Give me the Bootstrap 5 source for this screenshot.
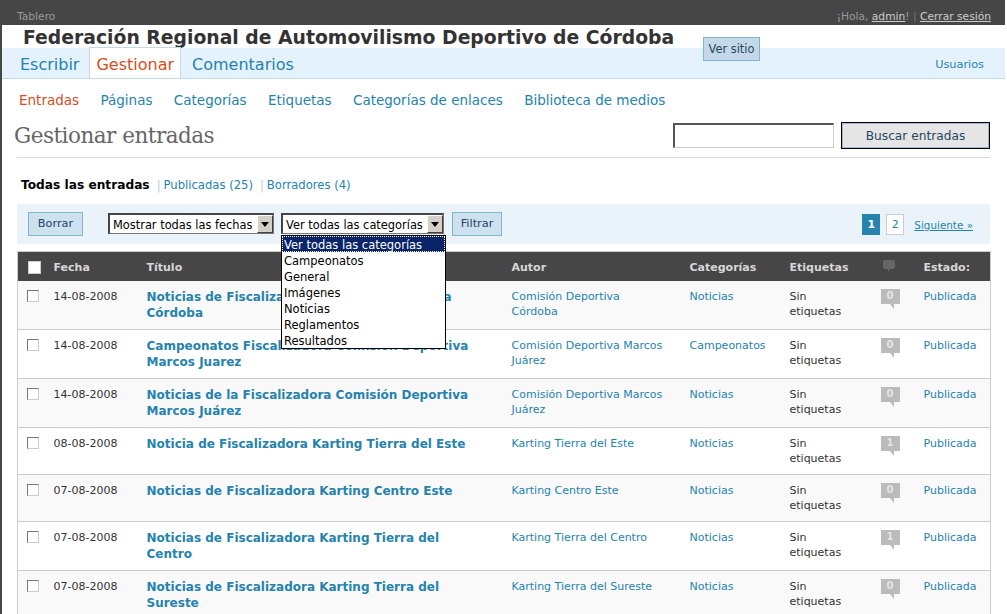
<!DOCTYPE html>
<html lang="es">
  <head>
    <meta charset="utf-8">
    <title>Gestionar entradas</title>
    <link href="https://cdn.jsdelivr.net/npm/bootstrap@5.3.3/dist/css/bootstrap.min.css" rel="stylesheet">
    <style>
      html, body { height: 614px; overflow: hidden; }
      body {
        font-family: "DejaVu Sans", Verdana, sans-serif;
        font-size: 11px;
        color: #333;
        background: #fff;
        border-left: 2px solid #464646;
        border-right: 2px solid #fff;
      }
      a { color: #2583ad; text-decoration: none; }

      /* top dark bar */
      .top-bar { background: #464646; height: 25px; color: #999; font-size: 10.7px; padding: 9px 14px 0 15px; }
      .top-bar a { color: #ccc; text-decoration: underline; }
      .top-bar .sep { color: #777; }

      .site-title { height: 23px; padding-left: 21px; font-size: 18.8px; font-weight: 700; color: #333; line-height: 25px; white-space: nowrap; overflow: hidden; }
      .ver-sitio { position: absolute; left: 703px; top: 37px; width: 57px; height: 24px; background: #c3d9ea; border: 1px solid #80b5d0; color: #264761; font-size: 11.4px; line-height: 22px; text-align: center; }

      /* main tabs */
      .main-tabs { height: 31px; background: #e4f2fd; border-bottom: 1px solid #c6d9e9; padding-left: 18px; }
      .main-tabs a { font-size: 16px; line-height: 34px; height: 31px; display: block; }
      .main-tabs a.active { color: #d54e21; background: #fff; border: 1px solid #c6d9e9; border-bottom: 0; margin: -1px 11px 0 10px; padding: 0 6px; }
      .main-tabs .usuarios { font-size: 11.3px; line-height: 33px; padding-right: 21px; }

      /* sub tabs */
      .sub-tabs { height: 39px; padding-left: 17px; gap: 21.4px; line-height: 43px; }
      .sub-tabs a { font-size: 13.5px; }
      .sub-tabs a.active { color: #d54e21; }

      /* heading */
      .page-head { margin: 0 15px; height: 40px; border-bottom: 1px solid #dadada; }
      .page-head h2 { font-family: "DejaVu Serif", Georgia, serif; font-size: 21.5px; font-weight: 400; color: #666; margin: 0 0 0 -3px; line-height: 36px; letter-spacing: -.5px; }
      .search-box { width: 161px; height: 25px; margin-top: 1px; border: 1px solid #ccc; border-top: 2px solid #555; border-left: 2px solid #555; background: #fff; }
      .search-btn { width: 149px; height: 27px; margin-left: 7px; background: #e5e5e5; border: 1px solid #000; outline: 1px solid #a3b8cc; outline-offset: -2px; color: #264761; font-size: 12.2px; text-align: center; line-height: 26px; }

      .status-list { padding: 18px 0 0 19px; height: 46px; font-size: 11.6px; }
      .status-list b { color: #000; font-size: 12.2px; }
      .status-list .sep { color: #bcd; margin: 0 3px 0 7px; }

      /* filter bar */
      .filter-bar { margin: 0 15px; height: 40px; background: #eaf3fa; padding: 8px 17px 0 11px; }
      .act-btn { background: #cee1ef; border: 1px solid #80b5d0; color: #246; height: 24px; line-height: 22px; text-align: center; font-size: 11.3px; }
      .btn-borrar { width: 55px; }
      .btn-filtrar { width: 50px; margin-left: 8px; }
      .fake-select { height: 21px; border: 1px solid #777; border-top: 2px solid #444; border-left: 2px solid #444; background: #fff; color: #000; font-size: 11.4px; line-height: 20px; padding-left: 3px; margin-top: 1px; position: relative; white-space: nowrap; }
      .fake-select i { position: absolute; right: 0; top: 0; width: 16px; height: 18px; background: #d4d0c8; border: 1px solid #fff; border-right-color: #404040; border-bottom-color: #404040; }
      .fake-select i::after { content: ""; position: absolute; left: 3px; top: 6px; border: 4px solid transparent; border-top: 5px solid #000; border-bottom: 0; }
      .sel-dates { width: 166px; margin-left: 25px; }
      .sel-cats { width: 163px; margin-left: 7px; }
      .pager { gap: 6px; }
      .page-num { width: 18px; height: 21px; margin-top: 2px; line-height: 19px; text-align: center; font-size: 11px; border: 1px solid #ccc; background: #fff; color: #2583ad; }
      .page-num.cur { background: #2583ad; border-color: #2583ad; color: #fff; font-weight: 700; }
      .next-link { text-decoration: underline; margin-left: 4px; font-size: 10.4px; padding-top: 6px; }

      /* opened dropdown */
      .drop-list { position: absolute; left: 281px; top: 235px; width: 165px; border: 1px solid #000; background: #fff; color: #000; font-size: 11.5px; line-height: 18px; z-index: 5; }
      .drop-list div { height: 16px; padding-left: 2px; white-space: nowrap; }
      .drop-list .sel { background: #0a246a; color: #fff; outline: 1px dotted #fff; outline-offset: -1px; }

      /* posts table */
      .posts-wrap { margin: 7px 15px 0; }
      table.posts { table-layout: fixed; width: 973px; margin: 0; border: 1px solid #ccc; border-top: 0; font-size: 11px; color: #333; --bs-table-bg: transparent; }
      table.posts th { background: #464646; color: #d7d7d7; height: 29px; font-weight: 700; padding: 8px 0 0; border-top: 1px solid #ccc; border-bottom: 0; vertical-align: top; font-size: 11px; }
      table.posts td { padding: 8px 8px 0 0; border-bottom: 1px solid #ccc; vertical-align: top; line-height: 15px; height: 49px; }
      table.posts tr.short td { height: 47px; }
      table.posts tr.odd td { background: #f9f9f9; }
      table.posts td.c-title { padding-right: 35px; }
      table.posts td.c-author { padding-right: 25px; }
      table.posts td.c-tags { padding-right: 32px; }
      table.posts td .title { font-size: 12px; font-weight: 700; line-height: 16px; display: block; }
      .w-check { width: 36px; } .w-date { width: 93px; } .w-title { width: 365px; } .w-author { width: 178px; }
      .w-cat { width: 100px; } .w-tags { width: 92px; } .w-com { width: 42px; } .w-state { width: 67px; }
      .chk { display: block; width: 12px; height: 12px; border: 1px solid #777; border-right-color: #ccc; border-bottom-color: #ccc; background: #fff; margin: 1px 0 0 9px; }
      .chk.head { width: 13px; height: 13px; border-color: #ccc; margin: 1px 0 0 10px; }
      .com-icon { display: block; margin-left: 1px; }
      .bubble { display: block; position: relative; width: 19px; height: 15px; margin-left: -1px; background: #bbb; color: #e5e5e5; text-align: center; font-size: 10px; line-height: 13px; font-weight: 700; }
      .bubble::after { content: ""; position: absolute; left: 9px; top: 15px; border-top: 5px solid #bbb; border-left: 4px solid transparent; }
    </style>
    <script src="https://cdn.jsdelivr.net/npm/bootstrap@5.3.3/dist/js/bootstrap.bundle.min.js"></script>
  </head>
  <body>
    <!-- top bar -->
    <div class="top-bar d-flex justify-content-between">
      <span>Tablero</span>
      <span>¡Hola, <a href="#">admin</a>! <span class="sep">|</span> <a href="#">Cerrar sesión</a></span>
    </div>

    <div class="site-title">Federación Regional de Automovilismo Deportivo de Córdoba</div>
    <a class="ver-sitio" href="#">Ver sitio</a>

    <!-- main menu -->
    <div class="main-tabs d-flex">
      <a href="#">Escribir</a>
      <a href="#" class="active">Gestionar</a>
      <a href="#">Comentarios</a>
      <a href="#" class="usuarios ms-auto">Usuarios</a>
    </div>

    <!-- sub menu -->
    <div class="sub-tabs d-flex">
      <a href="#" class="active">Entradas</a>
      <a href="#">Páginas</a>
      <a href="#">Categorías</a>
      <a href="#">Etiquetas</a>
      <a href="#">Categorías de enlaces</a>
      <a href="#">Biblioteca de medios</a>
    </div>

    <div class="page-head d-flex justify-content-between">
      <h2>Gestionar entradas</h2>
      <div class="d-flex align-items-start pt-1">
        <div class="search-box"></div>
        <div class="search-btn">Buscar entradas</div>
      </div>
    </div>

    <div class="status-list">
      <b>Todas las entradas</b><span class="sep">|</span><a href="#">Publicadas (25)</a><span class="sep">|</span><a href="#">Borradores (4)</a>
    </div>

    <!-- filters -->
    <div class="filter-bar d-flex">
      <div class="act-btn btn-borrar">Borrar</div>
      <div class="fake-select sel-dates">Mostrar todas las fechas<i></i></div>
      <div class="fake-select sel-cats">Ver todas las categorías<i></i></div>
      <div class="act-btn btn-filtrar">Filtrar</div>
      <div class="ms-auto d-flex pager">
        <span class="page-num cur">1</span>
        <span class="page-num">2</span>
        <a class="next-link" href="#">Siguiente »</a>
      </div>
    </div>

    <div class="drop-list">
      <div class="sel">Ver todas las categorías</div>
      <div>Campeonatos</div>
      <div>General</div>
      <div>Imágenes</div>
      <div>Noticias</div>
      <div>Reglamentos</div>
      <div>Resultados</div>
    </div>

    <!-- posts -->
    <div class="posts-wrap">
      <table class="table posts">
        <colgroup>
          <col class="w-check"><col class="w-date"><col class="w-title"><col class="w-author">
          <col class="w-cat"><col class="w-tags"><col class="w-com"><col class="w-state">
        </colgroup>
        <thead>
          <tr>
            <th><span class="chk head"></span></th>
            <th>Fecha</th>
            <th>Título</th>
            <th>Autor</th>
            <th>Categorías</th>
            <th>Etiquetas</th>
            <th>
              <svg width="12" height="12" viewBox="0 0 12 12" class="com-icon"><path d="M2 0h8a2 2 0 0 1 2 2v5a2 2 0 0 1-2 2H7l-2 3V9H2a2 2 0 0 1-2-2V2a2 2 0 0 1 2-2z" fill="#666"/></svg>
            </th>
            <th>Estado:</th>
          </tr>
        </thead>
        <tbody>
          <tr class="odd">
            <td><span class="chk"></span></td><td>14-08-2008</td>
            <td class="c-title"><a class="title" href="#">Noticias de Fiscalizadora Comisión Deportiva Córdoba</a></td>
            <td class="c-author"><a href="#">Comisión Deportiva Córdoba</a></td><td><a href="#">Noticias</a></td><td class="c-tags">Sin etiquetas</td>
            <td><span class="bubble">0</span></td><td><a href="#">Publicada</a></td>
          </tr>
          <tr>
            <td><span class="chk"></span></td><td>14-08-2008</td>
            <td class="c-title"><a class="title" href="#">Campeonatos Fiscalizadora Comisión Deportiva Marcos Juarez</a></td>
            <td class="c-author"><a href="#">Comisión Deportiva Marcos Juárez</a></td><td><a href="#">Campeonatos</a></td><td class="c-tags">Sin etiquetas</td>
            <td><span class="bubble">0</span></td><td><a href="#">Publicada</a></td>
          </tr>
          <tr class="odd">
            <td><span class="chk"></span></td><td>14-08-2008</td>
            <td class="c-title"><a class="title" href="#">Noticias de la Fiscalizadora Comisión Deportiva Marcos Juárez</a></td>
            <td class="c-author"><a href="#">Comisión Deportiva Marcos Juárez</a></td><td><a href="#">Noticias</a></td><td class="c-tags">Sin etiquetas</td>
            <td><span class="bubble">0</span></td><td><a href="#">Publicada</a></td>
          </tr>
          <tr class="short">
            <td><span class="chk"></span></td><td>08-08-2008</td>
            <td class="c-title"><a class="title" href="#">Noticia de Fiscalizadora Karting Tierra del Este</a></td>
            <td class="c-author"><a href="#">Karting Tierra del Este</a></td><td><a href="#">Noticias</a></td><td class="c-tags">Sin etiquetas</td>
            <td><span class="bubble">1</span></td><td><a href="#">Publicada</a></td>
          </tr>
          <tr class="short odd">
            <td><span class="chk"></span></td><td>07-08-2008</td>
            <td class="c-title"><a class="title" href="#">Noticias de Fiscalizadora Karting Centro Este</a></td>
            <td class="c-author"><a href="#">Karting Centro Este</a></td><td><a href="#">Noticias</a></td><td class="c-tags">Sin etiquetas</td>
            <td><span class="bubble">0</span></td><td><a href="#">Publicada</a></td>
          </tr>
          <tr>
            <td><span class="chk"></span></td><td>07-08-2008</td>
            <td class="c-title"><a class="title" href="#">Noticias de Fiscalizadora Karting Tierra del Centro</a></td>
            <td class="c-author"><a href="#">Karting Tierra del Centro</a></td><td><a href="#">Noticias</a></td><td class="c-tags">Sin etiquetas</td>
            <td><span class="bubble">1</span></td><td><a href="#">Publicada</a></td>
          </tr>
          <tr class="odd">
            <td><span class="chk"></span></td><td>07-08-2008</td>
            <td class="c-title"><a class="title" href="#">Noticias de Fiscalizadora Karting Tierra del Sureste</a></td>
            <td class="c-author"><a href="#">Karting Tierra del Sureste</a></td><td><a href="#">Noticias</a></td><td class="c-tags">Sin etiquetas</td>
            <td><span class="bubble">0</span></td><td><a href="#">Publicada</a></td>
          </tr>
        </tbody>
      </table>
    </div>
  </body>
</html>
